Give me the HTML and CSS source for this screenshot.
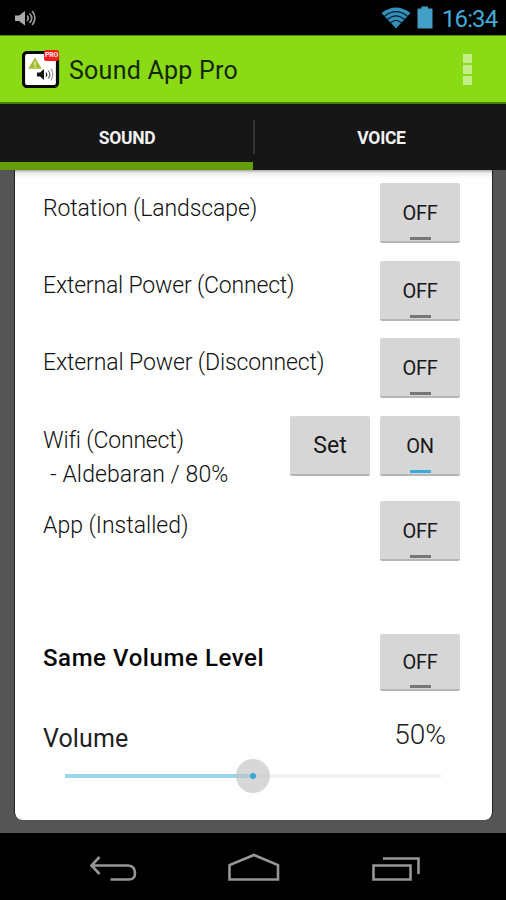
FILE: index.html
```html
<!DOCTYPE html>
<html lang="en">
<head>
<meta charset="utf-8">
<title>Sound App Pro</title>
<link rel="stylesheet" href="styles.css">
</head>
<body>
<div class="screen">
  <header class="status">
    <svg class="status-sound" width="24" height="18" viewBox="0 0 24 18">
      <path d="M1 6.500h4L11 2v14.500L5 12H1z" fill="#aaa"/>
      <g fill="none" stroke="#999" stroke-width="1.700"><path d="M13 6.500q2.500 2.500 0 5.500M15.500 4.500q4.500 4.500 0 9.500M18.200 2q5.500 7 0 14"/></g>
    </svg>
    <div class="status-right">
      <svg width="30" height="22" viewBox="0 0 30 22">
        <path d="M0.500 6Q15-5 29.500 6L15 21.500z" fill="#348fb9"/>
        <g fill="none" stroke="#03202e" stroke-width="1.200"><path d="M3.500 9.200Q15 0.200 26.500 9.200M6.500 12.500Q15 5.200 23.500 12.500M9.700 15.800Q15 11 20.300 15.800"/></g>
      </svg>
      <svg class="battery" width="16" height="23" viewBox="0 0 16 23"><path d="M0.500 3.500Q.5 2.500 1.500 2.500H4.500V.5H11V2.500H14.500Q15.500 2.500 15.500 3.500V22.500H.5z" fill="#439fc8"/></svg>
      <span class="clock">16:34</span>
    </div>
  </header>

  <div class="appbar">
    <div class="logo">
      <svg width="38" height="38" viewBox="0 0 38 38">
        <rect x="1.500" y="2.500" width="34" height="34" rx="3.500" fill="#fff" stroke="#080b04" stroke-width="3.200"/>
        <path d="M13 7.500L19.800 18.800H6.200z" fill="#a5bd31"/>
        <path d="M13 11.500v4M13 16.500v1.300" stroke="#e4ebbb" stroke-width="1.500"/>
        <path d="M15 22.500h3l4-3.500v11l-4-3.500h-3z" fill="#151515"/>
        <g fill="none" stroke-width="1.200"><path d="M24 22.500q1.500 2 0 4" stroke="#222"/><path d="M26.300 20.500q3 4 0 8" stroke="#666"/><path d="M28.800 18.700q4.200 5.800 0 11.600" stroke="#999"/></g>
      </svg>
      <span class="badge">PRO</span>
    </div>
    <h1 class="title">Sound App Pro</h1>
    <div class="overflow"><i></i><i></i><i></i></div>
  </div>

  <nav class="tabs">
    <div class="tab active"><span class="tab-sound">SOUND</span></div>
    <div class="tab"><span class="tab-voice">VOICE</span></div>
  </nav>

  <main class="content">
    <section class="card">
      <div class="row"><span class="label rotation">Rotation (Landscape)</span><button class="btn toggle">OFF</button></div>
      <div class="row"><span class="label connect">External Power (Connect)</span><button class="btn toggle">OFF</button></div>
      <div class="row"><span class="label disconnect">External Power (Disconnect)</span><button class="btn toggle">OFF</button></div>
      <div class="row wifi"><div class="label"><span class="wifi-name">Wifi (Connect)</span><span class="detail">- Aldebaran / 80%</span></div><button class="btn set">Set</button><button class="btn toggle on">ON</button></div>
      <div class="row app"><span class="label app-label">App (Installed)</span><button class="btn toggle">OFF</button></div>
      <div class="row same"><span class="label strong">Same Volume Level</span><button class="btn toggle">OFF</button></div>
      <div class="volume"><span class="volume-label">Volume</span><span class="percent">50%</span></div>
      <div class="slider"><div class="fill"></div><div class="thumb"></div></div>
    </section>
  </main>

  <footer class="navbar">
    <svg width="506" height="67" viewBox="0 0 506 67" fill="none" stroke="#969696" stroke-width="2.600">
      <path d="M99.500 24L91.500 32.500L99.500 41M92 32.500H128Q135 33 135 40T128 46.500H110.500"/>
      <path d="M229.500 46.500V32L254 22L278 32V46.500z"/>
      <path d="M373.500 32.500H410.500V46.500H373.500zM383 25.500H418.500V41"/>
    </svg>
  </footer>
</div>
</body>
</html>
```
FILE: styles.css
```css
* { box-sizing: border-box; }
body { margin: 0; background: #000; font-family: Roboto, "Liberation Sans", sans-serif; }
.screen { width: 506px; height: 900px; display: flex; flex-direction: column; overflow: hidden; }
svg { display: block; flex: none; }

.status { height: 35px; flex: none; background: #000; display: flex; justify-content: space-between; padding: 0 8px 0 14px; }
.status-sound { margin-top: 9px; }
.status-right { display: flex; padding-top: 6px; }
.status-right svg:first-child { margin-top: 1px; }
.battery { margin-left: 6px; }
.clock { width: 56px; margin-left: 9px; font-size: 24px; line-height: 26px; color: #42a9d8; white-space: nowrap; letter-spacing: -0.9px; }

.appbar { height: 69px; flex: none; background: #8ada16; border-top: 1px solid #568b0c; border-bottom: 2px solid #467a05; display: flex; padding-left: 22px; }
.logo { position: relative; width: 38px; height: 38px; margin-top: 14px; flex: none; }
.badge { position: absolute; right: 1px; top: 0; width: 15px; height: 11px; border-radius: 2px; background: #f51d1d; color: #ffdcdc; font-size: 7px; font-weight: 900; line-height: 11px; text-align: center; letter-spacing: -0.3px; }
.title { margin: 20px 0 0 9px; font-size: 25px; line-height: 30px; font-weight: 400; color: #16280a; white-space: nowrap; letter-spacing: 0.25px; }
.overflow { margin: 18px 34px 0 auto; display: grid; gap: 2px; align-content: start; }
.overflow i { width: 9px; height: 9px; background: #c3ee8a; }

.tabs { height: 66px; flex: none; background: #161616; display: flex; }
.tab { width: 253px; height: 66px; display: flex; justify-content: center; padding: 23px 0 0 1px; color: #f1f1f1; font-weight: 700; font-size: 17.500px; line-height: 22px; letter-spacing: -0.3px; }
.tab.active { border-bottom: 8px solid #659d05; }
.tab:last-child { padding-left: 4px; background: linear-gradient(#333, #333) 0 16px / 2px 34px no-repeat; }

.content { height: 663px; flex: none; background: #555; padding: 0 13px 13px 14px; }
.card { height: 650px; background: linear-gradient(#aaa, #eee 3px, #fff 9px); border-left: 1px solid #222; border-right: 1px solid #222; border-radius: 0 0 8px 8px; padding: 13px 32px 0 28px; }
.row { height: 77.500px; display: flex; align-items: flex-start; }
.label { flex: 1; padding-top: 11px; font-weight: 300; font-size: 23px; line-height: 28px; color: #111; white-space: nowrap; }
.rotation { letter-spacing: -0.1px; padding-top: 12px; }
.connect { letter-spacing: -0.18px; }
.disconnect { letter-spacing: -0.12px; }
.wifi-name { letter-spacing: -0.18px; }
.btn { width: 80px; height: 60px; flex: none; border: 0; border-bottom: 2px solid #b5b5b5; border-radius: 2px; background: #d6d6d6; padding: 0; font: 400 20px/60px Roboto, sans-serif; color: #181818; letter-spacing: -0.3px; }
.toggle { background: linear-gradient(#777, #777) 50% 54px / 21px 3px no-repeat #d6d6d6; }
.toggle.on { background-image: linear-gradient(#38addb, #38addb); }
.set { margin-right: 10px; font-size: 23px; letter-spacing: 0; }
.wifi { height: 85.500px; }
.wifi .label { display: flex; flex-direction: column; }
.detail { margin: 6px 0 0 7px; letter-spacing: 0.1px; }
.app { height: 133px; }
.same { height: 78px; }
.same .btn { height: 57px; line-height: 57px; background-position: 50% 51px; }
.strong { font-weight: 500; font-size: 24px; color: #080808; letter-spacing: 0.58px; padding-top: 10px; }
.volume { height: 52px; display: flex; justify-content: space-between; padding-right: 14px; color: #222; }
.volume-label { font-size: 25px; line-height: 30px; padding-top: 12px; letter-spacing: 0.1px; }
.percent { font-size: 28px; font-weight: 300; line-height: 34px; padding-top: 6px; }
.slider { position: relative; height: 4px; width: 376px; margin: 10px 0 0 22px; background: #f3f3f3; }
.fill { width: 50%; height: 4px; background: #99d7ec; }
.thumb { position: absolute; left: 171px; top: -15px; width: 34px; height: 34px; border-radius: 50%; background: radial-gradient(#34a9d6 0 2.500px, transparent 3.500px), rgba(190, 190, 190, .62); }

.navbar { height: 67px; flex: none; background: #000; }
```
